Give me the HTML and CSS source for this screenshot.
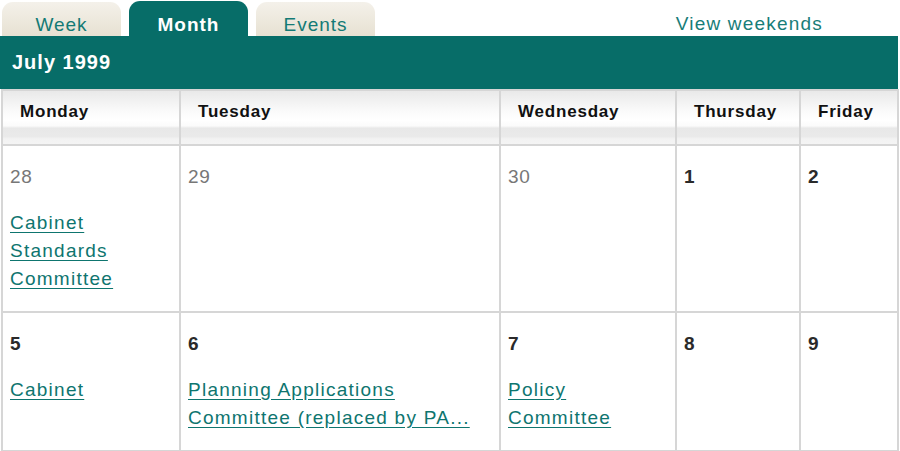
FILE: index.html
```html
<!DOCTYPE html>
<html lang="en">
<head>
<meta charset="utf-8">
<title>July 1999</title>
<link rel="stylesheet" href="styles.css">
</head>
<body>
<div class="calendar">
  <div class="topbar">
    <nav class="tabs">
      <a class="tab" href="#">Week</a>
      <a class="tab tab-active" href="#">Month</a>
      <a class="tab" href="#">Events</a>
    </nav>
    <a class="weekends" href="#">View weekends</a>
  </div>
  <div class="month-bar">July 1999</div>
  <table class="grid">
    <colgroup>
      <col class="c1"><col class="c2"><col class="c3"><col class="c4"><col class="c5">
    </colgroup>
    <thead>
      <tr>
        <th>Monday</th><th>Tuesday</th><th>Wednesday</th><th>Thursday</th><th>Friday</th>
      </tr>
    </thead>
    <tbody>
      <tr>
        <td><div class="num other">28</div><a class="event" href="#">Cabinet Standards Committee</a></td>
        <td><div class="num other">29</div></td>
        <td><div class="num other">30</div></td>
        <td><div class="num">1</div></td>
        <td><div class="num">2</div></td>
      </tr>
      <tr>
        <td><div class="num">5</div><a class="event" href="#">Cabinet</a></td>
        <td><div class="num">6</div><a class="event" href="#">Planning Applications Committee (replaced by PA...</a></td>
        <td><div class="num">7</div><a class="event" href="#">Policy Committee</a></td>
        <td><div class="num">8</div></td>
        <td><div class="num">9</div></td>
      </tr>
    </tbody>
  </table>
</div>
</body>
</html>
```

FILE: styles.css
```css
html, body {
  margin: 0;
  padding: 0;
  background: #ffffff;
}

body {
  font-family: "Liberation Sans", Arial, sans-serif;
  color: #222222;
}

.calendar {
  width: 898px;
}

.topbar {
  display: flex;
  align-items: flex-end;
  height: 36px;
}

.tabs {
  display: flex;
  gap: 8px;
  padding-left: 2px;
  align-items: flex-end;
}

.tab {
  width: 119px;
  height: 34px;
  box-sizing: border-box;
  padding-top: 11px;
  text-align: center;
  font-size: 19px;
  line-height: 24px;
  letter-spacing: 1px;
  color: #137a75;
  text-decoration: none;
  border-radius: 11px 11px 0 0;
  background: linear-gradient(#f4f1ea, #e7e1d2);
}

.tab-active {
  height: 35px;
  padding-top: 12px;
  background: #076d68;
  color: #ffffff;
  font-weight: bold;
}

.weekends {
  margin-left: auto;
  margin-right: 75px;
  font-size: 19px;
  line-height: 24px;
  letter-spacing: 1.2px;
  color: #187d78;
  text-decoration: none;
}

.month-bar {
  height: 53px;
  box-sizing: border-box;
  padding: 14px 12px 0;
  background: #076d68;
  color: #ffffff;
  font-size: 20px;
  line-height: 24px;
  font-weight: bold;
  letter-spacing: 1px;
}

.grid {
  width: 896px;
  margin-left: 1px;
  border-collapse: collapse;
  table-layout: fixed;
}

.c1 { width: 178px; }
.c2 { width: 320px; }
.c3 { width: 176px; }
.c4 { width: 124px; }
.c5 { width: 98px; }

.grid th,
.grid td {
  border: 2px solid #d6d6d6;
}

.grid th {
  text-align: left;
  padding: 10px 16px 22px 17px;
  font-size: 17px;
  line-height: 21px;
  letter-spacing: 0.8px;
  color: #111111;
  background: linear-gradient(#e9e9e9 0%, #f9f9f9 35%, #ffffff 55%, #fbfbfb 66%, #e8e8e8 70%, #eaeaea 86%, #f2f2f2 90%, #f4f4f4 100%);
}

.grid td {
  vertical-align: top;
  padding: 17px 7px 18px;
}

.num {
  font-size: 19px;
  line-height: 28px;
  font-weight: bold;
  letter-spacing: 0.8px;
  color: #2a2a2a;
  margin-bottom: 18px;
}

.num.other {
  font-weight: normal;
  color: #777777;
}

.event {
  display: block;
  font-size: 19px;
  line-height: 28px;
  letter-spacing: 1.25px;
  color: #0e756f;
  text-decoration: underline;
  text-underline-offset: 3px;
}
```
